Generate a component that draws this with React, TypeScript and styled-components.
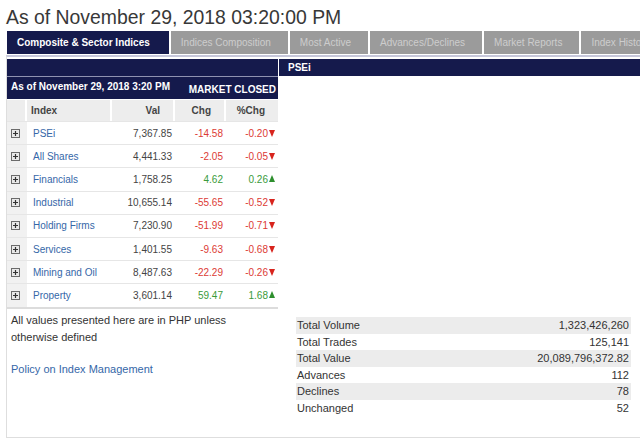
import React from "react";
import styled, { createGlobalStyle } from "styled-components";

const Global = createGlobalStyle`
  html, body { margin: 0; padding: 0; background: #fff; overflow: hidden; }
  body { width: 640px; height: 445px; font-family: "Liberation Sans", Arial, Helvetica, sans-serif; }
`;

const NAVY = "#151a4c";

const Page = styled.div`
  width: 720px;
  padding-left: 6px;
`;

const Title = styled.h1`
  margin: 0;
  padding-top: 6px;
  height: 25px;
  font-size: 19.4px;
  line-height: 22px;
  font-weight: normal;
  color: #383838;
`;

const Tabs = styled.div`
  display: flex;
  gap: 2px;
  margin-left: 1px;
  height: 23px;
`;

const Tab = styled.div<{ $active?: boolean }>`
  display: flex;
  align-items: center;
  height: 23px;
  padding: 0 17px 0 10px;
  font-size: 10px;
  white-space: nowrap;
  background: ${(p) => (p.$active ? NAVY : "#9b9b9b")};
  color: ${(p) => (p.$active ? "#fff" : "#cdcdcd")};
  font-weight: ${(p) => (p.$active ? "bold" : "normal")};
  ${(p) => (p.$active ? "padding-right: 19px;" : "")}
`;

const Panel = styled.div`
  margin-top: 1px;
  border-top: 2px solid #c6c7da;
  border-left: 1px solid #dedede;
  border-bottom: 1px solid #dedede;
  padding: 2px 0 0 0;
  height: 378px;
  display: grid;
  grid-template-columns: 271px 1fr;
  column-gap: 1px;
  box-sizing: content-box;
`;

const LeftCol = styled.div`
  display: flex;
  flex-direction: column;
`;

const NavyBar = styled.div`
  height: 17px;
  background: ${NAVY};
  color: #fff;
  font-size: 10px;
  font-weight: bold;
  display: flex;
  align-items: center;
`;

const TopBar = styled(NavyBar)`
  border-bottom: 1px solid #8f92b0;
`;

const StatusBar = styled(NavyBar)`
  height: 22px;
  justify-content: space-between;
  padding: 0 2px 0 4px;
`;

const StatusDate = styled.span`
  margin-top: -3px;
`;

const StatusClosed = styled.span`
  margin-top: 3px;
`;

const Table = styled.div`
  margin-top: 1px;
  border-bottom: 2px solid #dcdcdc;
`;

const COLS = "20px 85px 63px 51px 1fr";

const HeadRow = styled.div`
  display: grid;
  grid-template-columns: ${COLS};
  height: 21px;
`;

const HeadCell = styled.div<{ $align?: string }>`
  background: #ededed;
  border-right: 2px solid #fff;
  font-size: 10px;
  font-weight: bold;
  color: #444;
  display: flex;
  align-items: center;
  justify-content: ${(p) => (p.$align === "left" ? "flex-start" : "flex-end")};
  padding: ${(p) => (p.$align === "left" ? "0 0 0 4px" : "0 13px 0 0")};
  &:last-child { border-right: none; }
`;

const Row = styled.div`
  display: grid;
  grid-template-columns: ${COLS};
  height: 23.2px;
  border-top: 1px solid #e6e6e6;
  box-sizing: border-box;
`;

const IconCell = styled.div`
  background: #f1f1f1;
  display: flex;
  align-items: center;
  padding-left: 4px;
`;

const NameCell = styled.div`
  display: flex;
  align-items: center;
  padding-left: 6px;
  font-size: 10px;
  color: #3567a8;
`;

const NumCell = styled.div<{ $tone?: "up" | "down" }>`
  display: flex;
  align-items: center;
  justify-content: flex-end;
  padding-right: 3px;
  font-size: 10px;
  color: ${(p) => (p.$tone === "up" ? "#3a9b3a" : p.$tone === "down" ? "#dc3a34" : "#444")};
`;

const Arrow = styled.span<{ $up: boolean }>`
  display: inline-block;
  width: 0;
  height: 0;
  margin-left: 1px;
  border-left: 3.5px solid transparent;
  border-right: 3.5px solid transparent;
  ${(p) =>
    p.$up
      ? `border-bottom: 7px solid #2e8f2e; margin-bottom: 1px;`
      : `border-top: 7px solid #d8241d; margin-bottom: 0px;`}
`;

const Note = styled.div`
  padding: 3px 4px 0 4px;
  font-size: 11px;
  line-height: 17px;
  color: #333;
`;

const PolicyLink = styled.a`
  display: block;
  margin-top: 15px;
  color: #3567a8;
  text-decoration: none;
  font-size: 11px;
`;

const RightCol = styled.div`
  display: flex;
  flex-direction: column;
`;

const PsHeader = styled(NavyBar)`
  padding-left: 9px;
`;

const ChartArea = styled.div`
  height: 241px;
`;

const Stats = styled.div`
  margin-left: 17px;
  width: 335px;
`;

const StatRow = styled.div<{ $shade: boolean }>`
  display: flex;
  justify-content: space-between;
  align-items: center;
  height: 16.5px;
  padding: 0 2px 0 1px;
  font-size: 11px;
  color: #333;
  background: ${(p) => (p.$shade ? "#ececec" : "transparent")};
`;

const ExpandIcon = () => (
  <svg width="9" height="9" viewBox="0 0 9 9">
    <rect x="0.5" y="0.5" width="8" height="8" fill="#e9e9e9" stroke="#6b6b6b" />
    <path d="M2 4.5h5M4.5 2v5" stroke="#333" strokeWidth="1.2" />
  </svg>
);

const rows: [string, string, string, string, boolean][] = [
  ["PSEi", "7,367.85", "-14.58", "-0.20", false],
  ["All Shares", "4,441.33", "-2.05", "-0.05", false],
  ["Financials", "1,758.25", "4.62", "0.26", true],
  ["Industrial", "10,655.14", "-55.65", "-0.52", false],
  ["Holding Firms", "7,230.90", "-51.99", "-0.71", false],
  ["Services", "1,401.55", "-9.63", "-0.68", false],
  ["Mining and Oil", "8,487.63", "-22.29", "-0.26", false],
  ["Property", "3,601.14", "59.47", "1.68", true],
];

const stats: [string, string][] = [
  ["Total Volume", "1,323,426,260"],
  ["Total Trades", "125,141"],
  ["Total Value", "20,089,796,372.82"],
  ["Advances", "112"],
  ["Declines", "78"],
  ["Unchanged", "52"],
];

const tabs = [
  "Composite & Sector Indices",
  "Indices Composition",
  "Most Active",
  "Advances/Declines",
  "Market Reports",
  "Index History",
];

export default function App() {
  return (
    <Page>
      <Global />
      <Title>As of November 29, 2018 03:20:00 PM</Title>
      <Tabs>
        {tabs.map((t, i) => (
          <Tab key={t} $active={i === 0}>
            {t}
          </Tab>
        ))}
      </Tabs>
      <Panel>
        <LeftCol>
          <TopBar />
          <StatusBar>
            <StatusDate>As of November 29, 2018 3:20 PM</StatusDate>
            <StatusClosed>MARKET CLOSED</StatusClosed>
          </StatusBar>
          <Table>
            <HeadRow>
              <HeadCell $align="left" />
              <HeadCell $align="left">Index</HeadCell>
              <HeadCell>Val</HeadCell>
              <HeadCell>Chg</HeadCell>
              <HeadCell>%Chg</HeadCell>
            </HeadRow>
            {rows.map(([name, val, chg, pct, up]) => (
              <Row key={name}>
                <IconCell>
                  <ExpandIcon />
                </IconCell>
                <NameCell>{name}</NameCell>
                <NumCell>{val}</NumCell>
                <NumCell $tone={up ? "up" : "down"}>{chg}</NumCell>
                <NumCell $tone={up ? "up" : "down"}>
                  {pct}
                  <Arrow $up={up} />
                </NumCell>
              </Row>
            ))}
          </Table>
          <Note>
            All values presented here are in PHP unless otherwise defined
            <PolicyLink href="#">Policy on Index Management</PolicyLink>
          </Note>
        </LeftCol>
        <RightCol>
          <PsHeader>PSEi</PsHeader>
          <ChartArea />
          <Stats>
            {stats.map(([k, v], i) => (
              <StatRow key={k} $shade={i % 2 === 0}>
                <span>{k}</span>
                <span>{v}</span>
              </StatRow>
            ))}
          </Stats>
        </RightCol>
      </Panel>
    </Page>
  );
}
